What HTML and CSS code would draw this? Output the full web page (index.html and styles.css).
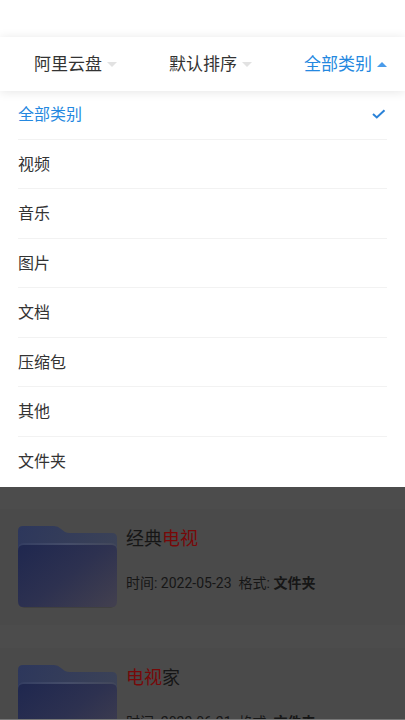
FILE: index.html
```html
<!DOCTYPE html>
<html lang="zh-CN">
<head>
<meta charset="utf-8">
<meta name="viewport" content="width=device-width, initial-scale=1">
<title>全部类别</title>
<link rel="stylesheet" href="styles.css">
</head>
<body>
<svg class="defs" width="0" height="0" aria-hidden="true">
  <defs>
    <linearGradient id="back" x1="0" y1="0" x2="1" y2="0.3">
      <stop offset="0" stop-color="#2d375c"/>
      <stop offset="1" stop-color="#3b4257"/>
    </linearGradient>
    <linearGradient id="edge" x1="0" y1="0" x2="1" y2="0">
      <stop offset="0" stop-color="#343e62"/>
      <stop offset="0.5" stop-color="#454d69"/>
      <stop offset="1" stop-color="#42475a"/>
    </linearGradient>
    <linearGradient id="front" x1="0" y1="0.1" x2="1" y2="0.9">
      <stop offset="0" stop-color="#20284f"/>
      <stop offset="0.5" stop-color="#2d3150"/>
      <stop offset="1" stop-color="#413f4f"/>
    </linearGradient>
    <symbol id="folder" viewBox="0 0 99 84">
      <rect x="1" y="10" width="97" height="73" rx="6" fill="#404040"/>
      <path d="M0 6Q0 1 5 1H36Q40 1 43 4L47 7Q49 8 52 8H94Q99 8 99 13V60H0Z" fill="url(#back)"/>
      <path d="M0 25Q0 18 6 18H93Q99 18 99 25V60H0Z" fill="url(#edge)"/>
      <path d="M0 26Q0 20 5 20H94Q99 20 99 26V76Q99 82 94 82H5Q0 82 0 76Z" fill="url(#front)"/>
    </symbol>
  </defs>
</svg>
<div class="app">
  <nav class="filters">
    <button class="filter" type="button">阿里云盘<span class="caret"></span></button>
    <button class="filter" type="button">默认排序<span class="caret"></span></button>
    <button class="filter active" type="button" aria-expanded="true">全部类别<span class="caret"></span></button>
  </nav>
  <div class="options">
    <button class="option active" type="button">全部类别
      <svg class="check" viewBox="0 0 14 10" aria-hidden="true"><path d="M1 5L4.8 8.5L12.5 1.2"/></svg>
    </button>
    <button class="option" type="button">视频</button>
    <button class="option" type="button">音乐</button>
    <button class="option" type="button">图片</button>
    <button class="option" type="button">文档</button>
    <button class="option" type="button">压缩包</button>
    <button class="option" type="button">其他</button>
    <button class="option" type="button">文件夹</button>
  </div>
  <main class="results">
    <article class="card">
      <svg class="folder" aria-hidden="true"><use href="#folder"/></svg>
      <div class="info">
        <h2 class="title">经典<em>电视</em></h2>
        <p class="meta"><span>时间: 2022-05-23</span><span>格式: <b>文件夹</b></span></p>
      </div>
    </article>
    <article class="card">
      <svg class="folder" aria-hidden="true"><use href="#folder"/></svg>
      <div class="info">
        <h2 class="title"><em>电视</em>家</h2>
        <p class="meta"><span>时间: 2022-06-21</span><span>格式: <b>文件夹</b></span></p>
      </div>
    </article>
  </main>
</div>
</body>
</html>
```
FILE: styles.css
```css
* {
  box-sizing: border-box;
}

body {
  margin: 0;
  background: #fff;
  color: #333;
  font-family: Roboto, "Noto Sans CJK SC", sans-serif;
}

button {
  border: 0;
  background: none;
  color: inherit;
  font: inherit;
}

.defs {
  position: absolute;
}

.app {
  display: flex;
  flex-direction: column;
  height: 100vh;
  overflow: hidden;
  padding-top: 37px;
}

.filters {
  display: grid;
  grid-template-columns: repeat(3, 1fr);
  flex: none;
  height: 54px;
  z-index: 1;
  background: #fff;
  box-shadow: 0 1px 10px rgba(0, 0, 0, 0.1);
}

.filter {
  display: flex;
  align-items: center;
  gap: 5px;
  padding: 0 0 3px 34px;
  font-size: 17px;
  white-space: nowrap;
}

.caret {
  border: 5px solid transparent;
  border-top-color: #e2e2e2;
  border-bottom: 0;
  margin-top: 3px;
}

.active {
  color: #2488e0;
}

.filter.active .caret {
  border-top: 0;
  border-bottom: 5px solid #4a9bea;
}

.options {
  display: grid;
  grid-auto-rows: 1fr;
  flex: none;
  min-height: calc(55vh + 1px);
  margin-top: -1px;
  padding: 0 18px 1px;
  background: #fff;
}

.option {
  display: flex;
  align-items: center;
  justify-content: space-between;
  padding: 0 0 2px;
  border-bottom: 1px solid #f2f2f2;
  font-size: 16px;
  text-align: left;
}

.option:last-child {
  border-bottom: 0;
}

.check {
  width: 14px;
  height: 10px;
  margin: 2px 1px 0 0;
  fill: none;
  stroke: #2a82d8;
  stroke-width: 2;
}

.results {
  display: flex;
  flex: 1;
  flex-direction: column;
  gap: 23px;
  min-height: 0;
  overflow: hidden;
  padding-top: 22px;
  border-bottom: 1px solid #777;
  background: #4c4c4c;
}

.card {
  display: flex;
  flex: none;
  gap: 9px;
  padding: 16px 18px;
  background: #4a4a4a;
  color: #161616;
}

.folder {
  flex: none;
  width: 99px;
  height: 84px;
}

.title {
  margin: 0;
  font-size: 18px;
  font-weight: 400;
  line-height: 28px;
}

.title em {
  color: #780808;
  font-style: normal;
}

.meta {
  display: flex;
  gap: 7px;
  margin: 20px 0 0;
  font-size: 14px;
  line-height: 20px;
  white-space: nowrap;
}
```
